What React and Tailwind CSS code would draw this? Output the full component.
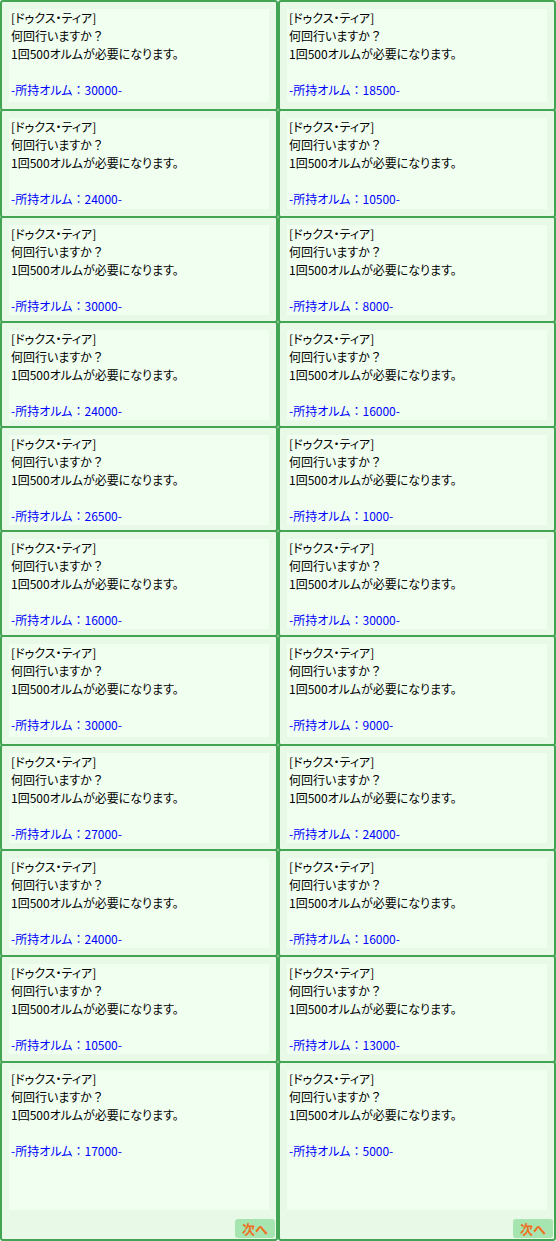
import React from "react";

const rows = [
  { h: "h-[111px]", a: "30000", b: "18500" },
  { h: "h-[109px]", a: "24000", b: "10500" },
  { h: "h-[107px]", a: "30000", b: "8000" },
  { h: "h-[107px]", a: "24000", b: "16000" },
  { h: "h-[106px]", a: "26500", b: "1000" },
  { h: "h-[107px]", a: "16000", b: "30000" },
  { h: "h-[111px]", a: "30000", b: "9000" },
  { h: "h-[107px]", a: "27000", b: "24000" },
  { h: "h-[108px]", a: "24000", b: "16000" },
  { h: "h-[108px]", a: "10500", b: "13000" },
];

function Card({ amount, h, last }) {
  return (
    <div
      className={`${h} w-[278px] border-2 border-[#43a554] rounded-[3px] bg-[#e8f9e8] p-[7px] flex flex-col`}
    >
      <div
        className={`bg-[#f0fff0] px-[2px] text-[12px] leading-[18px] text-black [font-feature-settings:'palt'] ${last ? "h-[140px]" : "flex-1"}`}
      >
        <div>[ドゥクス・ティア]</div>
        <div>
          何回行いますか<span className="[font-feature-settings:normal]">？</span>
        </div>
        <div>1回500オルムが必要になります。</div>
        <div>&nbsp;</div>
        <div className="text-[#0000ff]">
          -所持オルム<span className="[font-feature-settings:normal]">：</span>
          {amount}-
        </div>
      </div>
      {last && (
        <div className="flex justify-end mt-auto -mr-[6px] -mb-[6px]">
          <div className="w-[40px] h-[19px] rounded-[3px] bg-[#a6e4b0] flex items-center justify-center text-[13px] font-bold text-[#f07020] leading-none">
            次へ
          </div>
        </div>
      )}
    </div>
  );
}

export default function App() {
  return (
    <div
      className="w-[556px] h-[1241px] bg-white overflow-hidden"
      style={{ fontFamily: '"Noto Sans CJK JP", "Noto Sans", sans-serif' }}
    >
      {rows.map((r, i) => (
        <div key={i} className={`flex ${i > 0 ? "-mt-[2px]" : ""}`}>
          <Card amount={r.a} h={r.h} />
          <Card amount={r.b} h={r.h} />
        </div>
      ))}
      <div className="flex -mt-[2px]">
        <Card amount="17000" h="h-[180px]" last />
        <Card amount="5000" h="h-[180px]" last />
      </div>
    </div>
  );
}
